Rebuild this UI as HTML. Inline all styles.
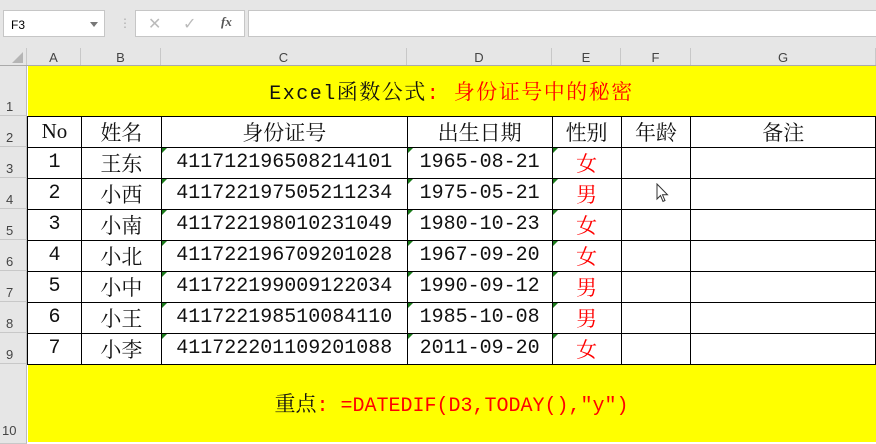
<!DOCTYPE html>
<html><head><meta charset="utf-8"><style>
*{margin:0;padding:0;box-sizing:border-box}
body{width:876px;height:444px;overflow:hidden;background:#e6e6e6;position:relative;font-family:"Liberation Mono","Noto Serif CJK SC",monospace}
.box{position:absolute;background:#fff;border:1px solid #c6c6c6}
.ch{position:absolute;top:48px;height:18px;font:13px "Liberation Sans",sans-serif;color:#444;text-align:center;line-height:19px;border-right:1px solid #c8c8c8}
.rh{position:absolute;left:0;width:27px;font:13px "Liberation Sans",sans-serif;color:#444;border-bottom:1px solid #c8c8c8;border-right:1px solid #bbb;padding-left:6px}
table{position:absolute;left:27px;top:66px;border-collapse:collapse;table-layout:fixed;background:#fff}
td{border:1px solid #000;text-align:center;font-size:20px;color:#111;padding:0;position:relative;white-space:nowrap;background:#fff}
.c{font-family:"Noto Serif CJK SC",serif;font-size:21px}
.y{background:#ff0;border:none}
.r{color:#f00}
.g::before{content:"";position:absolute;left:0;top:0;border-top:5px solid #1a7a1a;border-right:5px solid transparent}
</style></head><body>
<div class="box" style="left:3px;top:10px;width:102px;height:27px;font:12px 'Liberation Sans',sans-serif;padding:7px 0 0 7px">F3<span style="position:absolute;right:6px;top:11px;border-top:5px solid #777;border-left:4px solid transparent;border-right:4px solid transparent"></span></div>
<div style="position:absolute;left:119px;top:16px;color:#aaa;font:12px sans-serif">⋮</div>
<div class="box" style="left:135px;top:10px;width:110px;height:27px;color:#bbb;font:16px 'Liberation Sans',sans-serif"><span style="position:absolute;left:12px;top:3px">✕</span><span style="position:absolute;left:47px;top:3px">✓</span><span style="position:absolute;left:85px;top:3px;color:#555;font:italic 13px 'Liberation Serif',serif"><b>fx</b></span></div>
<div class="box" style="left:248px;top:10px;width:640px;height:27px"></div>
<div style="position:absolute;left:0;top:48px;width:27px;height:18px;border-right:1px solid #c8c8c8"><span style="position:absolute;right:3px;bottom:3px;border-bottom:11px solid #b5b5b5;border-left:11px solid transparent"></span></div>
<div class="ch" style="left:27px;width:54px">A</div>
<div class="ch" style="left:81px;width:80px">B</div>
<div class="ch" style="left:161px;width:246px">C</div>
<div class="ch" style="left:407px;width:145px">D</div>
<div class="ch" style="left:552px;width:69px">E</div>
<div class="ch" style="left:621px;width:70px">F</div>
<div class="ch" style="left:691px;width:185px">G</div>
<div style="position:absolute;left:0;top:65px;width:876px;height:1px;background:#aaa"></div>
<div class="rh" style="top:66px;height:50px;padding-top:33px">1</div>
<div class="rh" style="top:116px;height:31px;padding-top:14px">2</div>
<div class="rh" style="top:147px;height:31px;padding-top:14px">3</div>
<div class="rh" style="top:178px;height:31px;padding-top:14px">4</div>
<div class="rh" style="top:209px;height:31px;padding-top:14px">5</div>
<div class="rh" style="top:240px;height:31px;padding-top:14px">6</div>
<div class="rh" style="top:271px;height:31px;padding-top:14px">7</div>
<div class="rh" style="top:302px;height:31px;padding-top:14px">8</div>
<div class="rh" style="top:333px;height:31px;padding-top:14px">9</div>
<div class="rh" style="top:364px;height:80px;padding-top:59px;padding-left:2px">10</div>
<table>
<colgroup><col style="width:54px"><col style="width:80px"><col style="width:246px"><col style="width:145px"><col style="width:69px"><col style="width:70px"><col style="width:185px"></colgroup>
<tr style="height:50px"><td class="y" colspan="7" style="border-bottom:1px solid #000;background:#ff0;letter-spacing:1.5px">Excel<span class="c">函数公式</span><span class="r">: <span class="c">身份证号中的秘密</span></span></td></tr>
<tr style="height:31px"><td style="font-family:'Liberation Serif',serif;font-size:21px">No</td><td class="c">姓名</td><td class="c">身份证号</td><td class="c">出生日期</td><td class="c">性别</td><td class="c">年龄</td><td class="c">备注</td></tr>
<tr style="height:31px"><td>1</td><td class="c">王东</td><td class="g">411712196508214101</td><td class="g">1965-08-21</td><td class="g r c">女</td><td></td><td></td></tr>
<tr style="height:31px"><td>2</td><td class="c">小西</td><td class="g">411722197505211234</td><td class="g">1975-05-21</td><td class="g r c">男</td><td></td><td></td></tr>
<tr style="height:31px"><td>3</td><td class="c">小南</td><td class="g">411722198010231049</td><td class="g">1980-10-23</td><td class="g r c">女</td><td></td><td></td></tr>
<tr style="height:31px"><td>4</td><td class="c">小北</td><td class="g">411722196709201028</td><td class="g">1967-09-20</td><td class="g r c">女</td><td></td><td></td></tr>
<tr style="height:31px"><td>5</td><td class="c">小中</td><td class="g">411722199009122034</td><td class="g">1990-09-12</td><td class="g r c">男</td><td></td><td></td></tr>
<tr style="height:31px"><td>6</td><td class="c">小王</td><td class="g">411722198510084110</td><td class="g">1985-10-08</td><td class="g r c">男</td><td></td><td></td></tr>
<tr style="height:31px"><td>7</td><td class="c">小李</td><td class="g">411722201109201088</td><td class="g">2011-09-20</td><td class="g r c">女</td><td></td><td></td></tr>
<tr style="height:78px"><td class="y" colspan="7" style="border-top:1px solid #000;background:#ff0"><span class="c">重点</span><span class="r">: =DATEDIF(D3,TODAY(),"y")</span></td></tr>
</table>
<div style="position:absolute;left:27px;top:442px;width:849px;height:2px;background:#fff"></div>
<svg style="position:absolute;left:656px;top:183px" width="14" height="22" viewBox="0 0 14 22"><path d="M1 1 L1 16 L4.5 12.5 L7 18.5 L9 17.5 L6.5 11.8 L11.5 11.8 Z" fill="#fff" stroke="#333" stroke-width="1"/></svg>
</body></html>
